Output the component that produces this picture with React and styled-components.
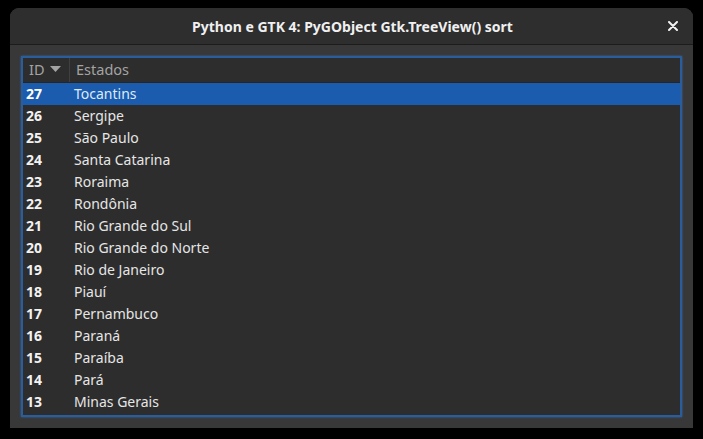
import React from 'react';
import styled, { createGlobalStyle } from 'styled-components';

const GlobalStyle = createGlobalStyle`
  html, body {
    margin: 0;
    padding: 0;
    background: #000;
    width: 703px;
    height: 439px;
    overflow: hidden;
  }
  body {
    font-family: "Noto Sans", "Open Sans", sans-serif;
  }
`;

const Screen = styled.div`
  width: 703px;
  height: 439px;
  padding: 8px 10px 11px 10px;
  box-sizing: border-box;
  display: flex;
`;

const Window = styled.div`
  flex: 1;
  display: flex;
  flex-direction: column;
  background: #383838;
  border-radius: 9px 9px 0 0;
  overflow: hidden;
`;

const TitleBar = styled.div`
  height: 36px;
  flex-shrink: 0;
  display: flex;
  align-items: center;
  justify-content: center;
  position: relative;
  background: #2e2e2e;
  border-bottom: 1px solid #1c1c1c;
`;

const Title = styled.div`
  color: #f0f0f0;
  font-weight: 700;
  font-size: 14px;
  padding-left: 2px;
`;

const CloseButton = styled.div`
  position: absolute;
  right: 12px;
  top: 10px;
  width: 16px;
  height: 16px;
  display: flex;
  align-items: center;
  justify-content: center;
`;

const Body = styled.div`
  flex: 1;
  padding: 11px;
  display: flex;
`;

const Tree = styled.div`
  flex: 1;
  background: #2d2d2d;
  border: 2px solid #2a5d9c;
  box-shadow: 0 0 2px rgba(53, 132, 228, 0.6);
  display: flex;
  flex-direction: column;
`;

const HeaderRow = styled.div`
  display: flex;
  height: 24px;
  align-items: center;
  border-bottom: 1px solid #262626;
`;

const HeaderCell = styled.div`
  width: ${p => p.$w || 'auto'};
  flex: ${p => (p.$w ? 'none' : 1)};
  height: 100%;
  box-sizing: border-box;
  padding-left: ${p => p.$pl || 4}px;
  padding-bottom: 3px;
  display: flex;
  align-items: center;
  gap: 5px;
  color: #a3a3a3;
  font-size: 14.5px;
  border-right: ${p => (p.$sep ? '1px solid #404040' : 'none')};
`;

const Row = styled.div`
  display: flex;
  height: 22px;
  align-items: center;
  padding-bottom: 2px;
  box-sizing: border-box;
  background: ${p => (p.$selected ? '#1b5cae' : 'transparent')};
  color: ${p => (p.$selected ? '#dfe9f6' : '#e6e6e6')};
  font-size: 14px;
`;

const IdCell = styled.div`
  width: 48px;
  padding-left: 3px;
  font-weight: 700;
  color: ${p => (p.$selected ? '#ffffff' : '#f2f2f2')};
`;

const NameCell = styled.div`
  flex: 1;
`;

const estados = [
  [27, 'Tocantins'],
  [26, 'Sergipe'],
  [25, 'São Paulo'],
  [24, 'Santa Catarina'],
  [23, 'Roraima'],
  [22, 'Rondônia'],
  [21, 'Rio Grande do Sul'],
  [20, 'Rio Grande do Norte'],
  [19, 'Rio de Janeiro'],
  [18, 'Piauí'],
  [17, 'Pernambuco'],
  [16, 'Paraná'],
  [15, 'Paraíba'],
  [14, 'Pará'],
  [13, 'Minas Gerais'],
];

const App = () => (
  <>
    <GlobalStyle />
    <Screen>
      <Window>
        <TitleBar>
          <Title>Python e GTK 4: PyGObject Gtk.TreeView() sort</Title>
          <CloseButton>
            <svg width="10" height="10" viewBox="0 0 10 10">
              <path d="M1 1 L9 9 M9 1 L1 9" stroke="#f2f2f2" strokeWidth="2" strokeLinecap="round" />
            </svg>
          </CloseButton>
        </TitleBar>
        <Body>
          <Tree>
            <HeaderRow>
              <HeaderCell $w="47px" $sep $pl={6}>
                ID
                <svg width="11" height="6" viewBox="0 0 11 6">
                  <path d="M0 0 L11 0 L5.5 6 Z" fill="#a3a3a3" />
                </svg>
              </HeaderCell>
              <HeaderCell $pl={6}>Estados</HeaderCell>
            </HeaderRow>
            {estados.map(([id, nome], i) => (
              <Row key={id} $selected={i === 0}>
                <IdCell $selected={i === 0}>{id}</IdCell>
                <NameCell>{nome}</NameCell>
              </Row>
            ))}
          </Tree>
        </Body>
      </Window>
    </Screen>
  </>
);

export default App;
